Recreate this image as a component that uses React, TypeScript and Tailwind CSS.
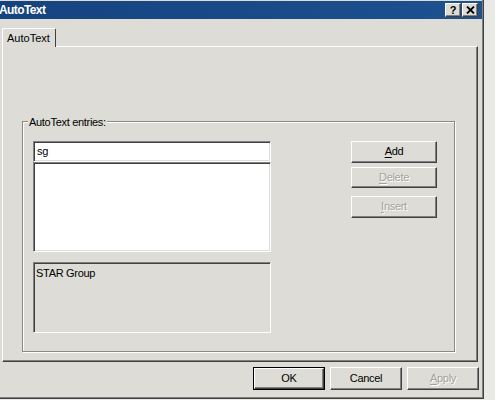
import React from 'react';

const raised =
  'border border-t-white border-l-white border-b-[#404040] border-r-[#404040] shadow-[inset_-1px_-1px_0_#808080]';
const sunken =
  'border border-t-[#808080] border-l-[#808080] border-b-white border-r-white shadow-[inset_1px_1px_0_#404040,inset_-1px_-1px_0_#dddcd6]';

function Btn({
  label,
  underline,
  disabled = false,
  isDefault = false,
  className = '',
}: {
  label: string;
  underline?: number;
  disabled?: boolean;
  isDefault?: boolean;
  className?: string;
}) {
  const chars = label.split('');
  const text = (
    <span
      className={
        disabled
          ? 'text-[#a3a29c] [text-shadow:1px_1px_0_#ffffff]'
          : 'text-black'
      }
    >
      {chars.map((c, i) =>
        i === underline ? (
          <span key={i} className="underline underline-offset-2">
            {c}
          </span>
        ) : (
          <span key={i}>{c}</span>
        )
      )}
    </span>
  );
  if (isDefault) {
    return (
      <div className={`border border-black ${className}`}>
        <div className={`${raised} h-full flex items-center justify-center`}>{text}</div>
      </div>
    );
  }
  return <div className={`${raised} flex items-center justify-center ${className}`}>{text}</div>;
}

function TitleButton({ children }: { children: React.ReactNode }) {
  return (
    <div
      className={`${raised} w-[16px] h-[14px] bg-[#dddcd6] flex items-center justify-center text-[11px] font-bold leading-none text-black`}
    >
      {children}
    </div>
  );
}

export default function App() {
  return (
    <div
      className="w-[495px] h-[400px] overflow-hidden bg-[#e9e9e5] text-[11px] tracking-[-0.3px] text-black"
      style={{ fontFamily: '"Liberation Sans", Arial, sans-serif' }}
    >
      {/* dialog window */}
      <div className="-ml-[5px] w-[489px] h-[399px] bg-[#dddcd6] flex flex-col border-r border-b border-[#404040] shadow-[inset_-1px_-1px_0_#808080]">
        {/* title bar */}
        <div className="h-[18px] mx-[1px] mt-[1px] pl-[3px] pr-[4px] flex items-center justify-between bg-gradient-to-r from-[#15437f] to-[#1d5190]">
          <span className="text-white font-bold text-[12px] tracking-[-0.6px]">AutoText</span>
          <div className="flex items-center gap-[1px]">
            <TitleButton>?</TitleButton>
            <TitleButton>
              <svg width="9" height="8" viewBox="0 0 9 8">
                <path d="M1 0.5 L8 7.5 M8 0.5 L1 7.5" stroke="#000" strokeWidth="1.8" />
              </svg>
            </TitleButton>
          </div>
        </div>

        {/* tabs */}
        <div className="mt-[9px] pl-[7px] flex">
          <div className="relative z-10 -mb-px h-[19px] w-[54px] bg-[#dddcd6] border-t border-l border-r border-t-white border-l-white border-r-[#404040] rounded-t-[2px] flex items-center pl-[4px] tracking-normal">
            AutoText
          </div>
        </div>

        {/* tab panel */}
        <div className="ml-[7px] w-[476px] h-[316px] border border-t-white border-l-white border-b-[#404040] border-r-[#404040] shadow-[inset_-1px_-1px_0_#808080] pl-[19px] pt-[74px]">
          {/* group box */}
          <div className="relative w-[433px] h-[231px] border border-[#8a8984] shadow-[inset_1px_1px_0_#ffffff,1px_1px_0_#ffffff]">
            <span className="relative -top-[8px] left-[5px] bg-[#dddcd6] px-[1px]">
              AutoText entries:
            </span>
            <div className="mt-[2px] pl-[10px] flex">
              {/* left column */}
              <div className="w-[238px] flex flex-col">
                <div className={`${sunken} h-[21px] bg-white flex items-center pl-[3px]`}>sg</div>
                <div className={`${sunken} h-[90px] bg-white`} />
                <div className={`${sunken} mt-[10px] h-[71px] bg-[#dddcd6] pl-[2px] pt-[2px]`}>
                  STAR Group
                </div>
              </div>
              {/* right column */}
              <div className="ml-[80px] flex flex-col">
                <Btn label="Add" underline={0} className="w-[86px] h-[22px]" />
                <Btn label="Delete" underline={0} disabled className="mt-[4px] w-[86px] h-[21px]" />
                <Btn label="Insert" underline={0} disabled className="mt-[8px] w-[86px] h-[22px]" />
              </div>
            </div>
          </div>
        </div>

        {/* bottom buttons */}
        <div className="mt-[5px] ml-[258px] flex gap-[5px]">
          <Btn label="OK" isDefault className="w-[72px] h-[23px]" />
          <Btn label="Cancel" className="w-[72px] h-[23px]" />
          <Btn label="Apply" underline={0} disabled className="w-[72px] h-[23px]" />
        </div>
      </div>
    </div>
  );
}
